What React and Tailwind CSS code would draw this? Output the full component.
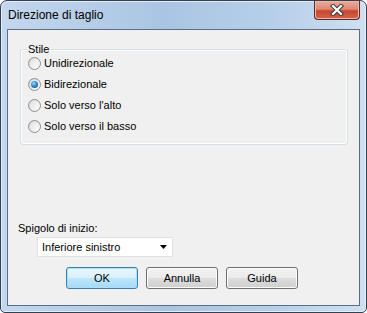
import React, { useState } from 'react';

const OPTIONS = ['Unidirezionale', 'Bidirezionale', "Solo verso l'alto", 'Solo verso il basso'];

const Radio = ({ checked }) => (
  <span className="relative flex h-[13px] w-[13px] shrink-0 items-center justify-center rounded-full border border-[#8f8f8f] bg-[linear-gradient(135deg,#d2d2d2,#ffffff)]">
    <span className="h-[9px] w-[9px] rounded-full bg-[linear-gradient(135deg,#e2e2e2,#fbfbfb)]" />
    {checked && (
      <span className="absolute h-[7px] w-[7px] rounded-full bg-[radial-gradient(circle_at_40%_35%,#9adafe_0%,#2d8ad4_45%,#0f3f6e_100%)]" />
    )}
  </span>
);

const WinButton = ({ label, primary }) => (
  <button
    className={`flex h-[22px] w-[72px] items-center justify-center rounded-[3px] border text-[11px] text-black ${
      primary
        ? 'border-[#3c7fb1] bg-[linear-gradient(#eaf6fd_0%,#d9f0fc_50%,#bee6fd_51%,#a7d9f5_100%)] shadow-[inset_0_0_0_1px_#a6e2fb]'
        : 'border-[#707070] bg-[linear-gradient(#f2f2f2_0%,#ebebeb_50%,#dddddd_51%,#cfcfcf_100%)] shadow-[inset_0_0_0_1px_#fcfcfc]'
    }`}
  >
    {label}
  </button>
);

export default function App() {
  const [selected, setSelected] = useState(1);

  return (
    <div className="h-[313px] w-[367px] bg-white font-['Liberation_Sans',Arial,sans-serif]">
      <div className="flex h-full w-full flex-col rounded-t-[7px] rounded-b-[5px] border border-[#34404e] bg-[linear-gradient(90deg,#c3d7ee_0%,#aac5e3_45%,#b7cfe9_75%,#d0e0f1_100%)] shadow-[inset_0_0_0_1px_#e4eef9]">
        {/* Title bar */}
        <div className="flex h-[28px] items-start justify-between">
          <span className="pl-[7px] pt-[7px] text-[12px] leading-[14px] text-black">Direzione di taglio</span>
          <div className="mr-[6px] flex h-[19px] w-[46px] items-center justify-center rounded-b-[4px] border border-t-0 border-[#5a2a22] bg-[linear-gradient(#e9a99a_0%,#dd8a76_45%,#c8452e_55%,#d2664b_100%)] shadow-[inset_0_0_0_1px_#f0b8a8]">
            <svg width="14" height="12" viewBox="0 0 14 12">
              <path d="M3 2 L11 10 M11 2 L3 10" stroke="#3a3a3a" strokeWidth="4.2" strokeLinecap="square" />
              <path d="M3 2 L11 10 M11 2 L3 10" stroke="#ffffff" strokeWidth="2.2" strokeLinecap="square" />
            </svg>
          </div>
        </div>

        {/* Client area */}
        <div className="mx-[6px] mb-[6px] flex flex-1 flex-col border border-[#5c6e83] bg-[#f0f0f0] text-[11px] leading-[13px] text-black">
          <div className="relative ml-[12px] mr-[11px] mt-[19px] rounded-[3px] border border-[#d5dfe5] pb-[7px] pl-[7px] pt-[3px] shadow-[inset_0_0_0_1px_#ffffff]">
            <span className="absolute -top-[7px] left-[6px] bg-[#f0f0f0] px-[1px]">Stile</span>
            {OPTIONS.map((opt, i) => (
              <div
                key={opt}
                onClick={() => setSelected(i)}
                className="flex h-[21px] cursor-default items-center gap-[3px]"
              >
                <Radio checked={selected === i} />
                <span>{opt}</span>
              </div>
            ))}
          </div>

          <div className="ml-[10px] mt-[77px]">Spigolo di inizio:</div>

          <div className="ml-[29px] mt-[2px] flex h-[20px] w-[136px] items-center justify-between border border-[#dde2e8] bg-white pl-[4px] pr-[5px]">
            <span>Inferiore sinistro</span>
            <svg width="7" height="4" viewBox="0 0 7 4">
              <path d="M0 0 H7 L3.5 4 Z" fill="#000" />
            </svg>
          </div>

          <div className="ml-[58px] mt-[10px] flex gap-[8px]">
            <WinButton label="OK" primary />
            <WinButton label="Annulla" />
            <WinButton label="Guida" />
          </div>
        </div>
      </div>
    </div>
  );
}
